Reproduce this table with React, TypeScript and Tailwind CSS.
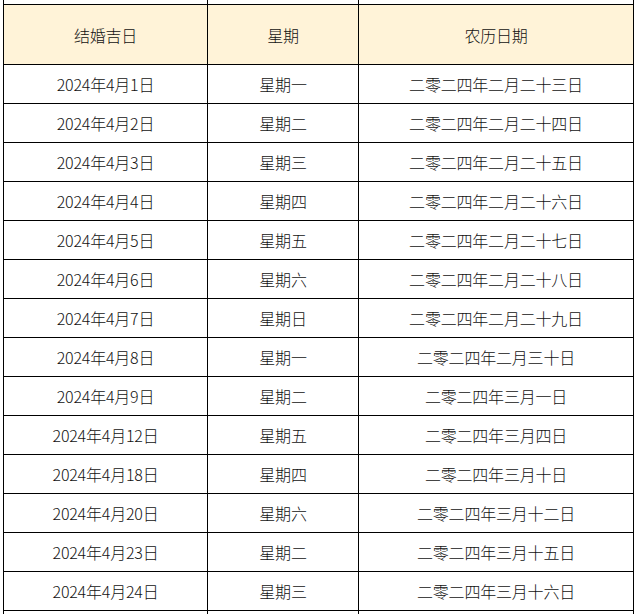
const rows = [
  ['2024年4月1日', '星期一', '二零二四年二月二十三日'],
  ['2024年4月2日', '星期二', '二零二四年二月二十四日'],
  ['2024年4月3日', '星期三', '二零二四年二月二十五日'],
  ['2024年4月4日', '星期四', '二零二四年二月二十六日'],
  ['2024年4月5日', '星期五', '二零二四年二月二十七日'],
  ['2024年4月6日', '星期六', '二零二四年二月二十八日'],
  ['2024年4月7日', '星期日', '二零二四年二月二十九日'],
  ['2024年4月8日', '星期一', '二零二四年二月三十日'],
  ['2024年4月9日', '星期二', '二零二四年三月一日'],
  ['2024年4月12日', '星期五', '二零二四年三月四日'],
  ['2024年4月18日', '星期四', '二零二四年三月十日'],
  ['2024年4月20日', '星期六', '二零二四年三月十二日'],
  ['2024年4月23日', '星期二', '二零二四年三月十五日'],
  ['2024年4月24日', '星期三', '二零二四年三月十六日'],
]

const grid = 'grid grid-cols-[204px_151px_275px]'
const cell = 'flex items-center justify-center border-r border-black'

function Row({ cols, className }: { cols: string[]; className: string }) {
  return (
    <div className={`${grid} border-b border-black ${className}`}>
      {cols.map((c, i) => (
        <div key={i} className={cell}>
          {c}
        </div>
      ))}
    </div>
  )
}

export default function App() {
  return (
    <div className="w-[638px] h-[614px] overflow-hidden bg-white">
      <div
        className="ml-[3px] w-[631px] border-l border-black text-[16px] font-light leading-none tracking-[-0.2px] text-[#111]"
        style={{ fontFamily: '"Noto Sans CJK SC", "Noto Sans", sans-serif' }}
      >
        {/* sliver of the row above */}
        <Row cols={['', '', '']} className="h-[5px]" />

        {/* Header */}
        <Row cols={['结婚吉日', '星期', '农历日期']} className="h-[60px] bg-[#fff3d8]" />

        {rows.map((r, i) => (
          <Row key={i} cols={r} className="h-[39px]" />
        ))}

        {/* sliver of the row below */}
        <div className={`${grid} h-[10px]`}>
          <div className={cell} />
          <div className={cell} />
          <div className={cell} />
        </div>
      </div>
    </div>
  )
}
